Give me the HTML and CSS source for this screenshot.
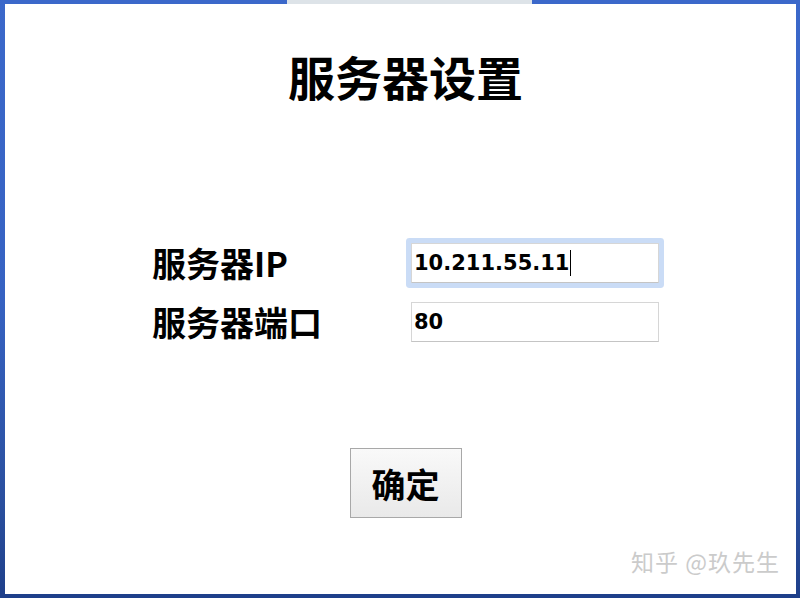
FILE: index.html
```html
<!DOCTYPE html>
<html lang="zh-CN">
<head>
<meta charset="utf-8">
<title>服务器设置</title>
<link rel="stylesheet" href="styles.css">
</head>
<body>
<div class="window">
  <div class="topbar">
    <div class="seg seg-blue seg-left"></div>
    <div class="seg seg-gray"></div>
    <div class="seg seg-blue seg-right"></div>
  </div>
  <div class="panel">
    <h1 class="title">服务器设置</h1>
    <div class="form">
      <label class="label">服务器IP</label>
      <div class="field focused" role="textbox"><span class="value">10.211.55.11</span><span class="caret"></span></div>
      <label class="label">服务器端口</label>
      <div class="field" role="textbox"><span class="value">80</span></div>
    </div>
    <div class="actions">
      <button class="btn" type="button">确定</button>
    </div>
    <div class="watermark">知乎 @玖先生</div>
  </div>
</div>
</body>
</html>
```

FILE: styles.css
```css
html, body {
  margin: 0;
  padding: 0;
  width: 800px;
  height: 598px;
  overflow: hidden;
  background: #1c3d87;
}

.window {
  width: 800px;
  height: 598px;
  box-sizing: border-box;
  padding: 0 4px 0 5px;
  border-bottom: 4px solid #1e3f8a;
  background: linear-gradient(to bottom, #3b68ca 0%, #3662c2 50%, #2a4f9e 85%, #1f408b 100%);
  display: flex;
  flex-direction: column;
}

.topbar {
  height: 4px;
  display: flex;
}

.seg-blue { background: #3b68ca; }
.seg-left { width: 282px; }
.seg-gray { width: 245px; background: #dde3e8; }
.seg-right { flex: 1; }

.panel {
  flex: 1;
  background: #ffffff;
  position: relative;
  padding-left: 10px;
  display: flex;
  flex-direction: column;
  align-items: center;
  font-family: "Noto Sans CJK SC", "Noto Sans", sans-serif;
  color: #000;
}

.title {
  margin: 48px 0 0 0;
  font-size: 47px;
  line-height: 48px;
  font-weight: 700;
}

.form {
  margin-top: 143px;
  align-self: flex-start;
  margin-left: 137px;
  display: grid;
  grid-template-columns: 259px 248px;
  row-gap: 19px;
  align-items: center;
}

.label {
  font-size: 34px;
  font-weight: 700;
  line-height: 40px;
}

.field {
  height: 40px;
  box-sizing: border-box;
  border: 1px solid #d6d6d6;
  border-bottom-color: #c4c4c4;
  background: #fff;
  display: flex;
  align-items: center;
  padding-left: 2px;
  font-family: "DejaVu Sans", "Noto Sans", sans-serif;
  font-weight: 700;
  font-size: 21px;
}

.field.focused {
  border-radius: 1px;
  box-shadow: 0 0 0 5px #cadcf6;
}

.caret {
  display: inline-block;
  width: 1px;
  height: 26px;
  background: #000;
  margin-left: 1px;
}

.actions {
  margin-top: 106px;
  display: flex;
  justify-content: center;
}

.btn {
  width: 112px;
  height: 70px;
  box-sizing: border-box;
  border: 1px solid #a8a8a8;
  background: linear-gradient(to bottom, #f9f9f9, #e9e9e9);
  font-family: "Noto Sans CJK SC", sans-serif;
  font-weight: 700;
  font-size: 34px;
  color: #000;
  padding: 0;
}

.watermark {
  position: absolute;
  right: 16px;
  bottom: 16px;
  font-size: 23px;
  color: #cbcbcb;
  font-family: "Noto Sans CJK SC", sans-serif;
  letter-spacing: 1px;
}
```
